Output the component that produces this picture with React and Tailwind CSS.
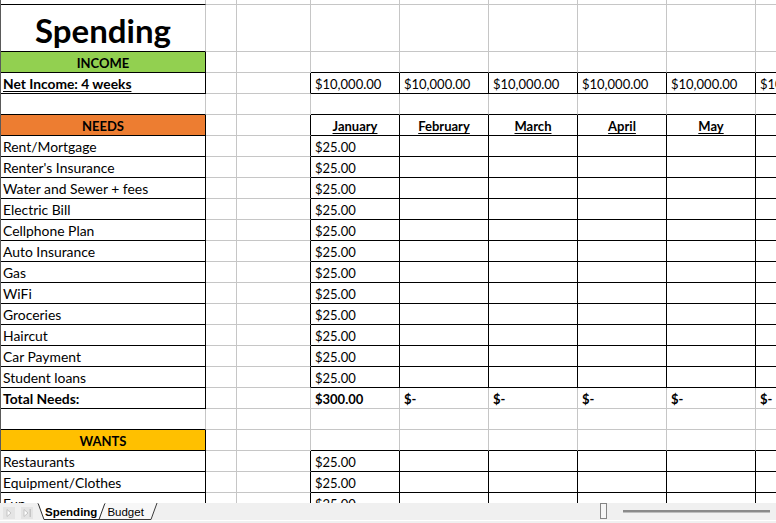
import React from "react";

const FONT = { fontFamily: "Lato, 'Open Sans', sans-serif" };

const widths = ["w-[205px]", "w-[31px]", "w-[74px]", "w-[89px]", "w-[89px]", "w-[89px]", "w-[89px]", "w-[89px]", "w-[89px]"];
const months = ["January", "February", "March", "April", "May", "June"];
const needs = [
  "Rent/Mortgage",
  "Renter's Insurance",
  "Water and Sewer + fees",
  "Electric Bill",
  "Cellphone Plan",
  "Auto Insurance",
  "Gas",
  "WiFi",
  "Groceries",
  "Haircut",
  "Car Payment",
  "Student loans",
];

const rows = [
  { kind: "top" },
  { kind: "title" },
  { kind: "income" },
  { kind: "net" },
  { kind: "blank" },
  { kind: "needs" },
  ...needs.map((l) => ({ kind: "item", label: l })),
  { kind: "total" },
  { kind: "blank" },
  { kind: "wants" },
  { kind: "item", label: "Restaurants" },
  { kind: "item", label: "Equipment/Clothes" },
  { kind: "item", label: "Fun" },
];

function isBox(r, c) {
  const row = rows[r];
  if (!row) return false;
  const k = row.kind;
  if (c === 0) return ["income", "net", "needs", "item", "total", "wants"].includes(k);
  if (c >= 3) return ["net", "needs", "item"].includes(k);
  return false;
}

function content(row, c) {
  const k = row.kind;
  if (k === "title" && c === 0)
    return <div className="w-full text-center font-bold text-[33px] leading-[40px]">Spending</div>;
  if (k === "income" && c === 0) return <div className="w-full text-center font-bold">INCOME</div>;
  if (k === "needs" && c === 0) return <div className="w-full text-center font-bold">NEEDS</div>;
  if (k === "wants" && c === 0) return <div className="w-full text-center font-bold">WANTS</div>;
  if (k === "net") {
    if (c === 0)
      return <div className="pl-[2px] text-[13.8px] font-bold underline underline-offset-[2px]">Net Income: 4 weeks</div>;
    if (c >= 3) return <div className="pl-[4px]">$10,000.00</div>;
  }
  if (k === "needs" && c >= 3)
    return <div className="w-full text-center font-bold underline underline-offset-[2px]">{months[c - 3]}</div>;
  if (k === "item") {
    if (c === 0) return <div className="pl-[2px] text-[13.9px] whitespace-nowrap">{row.label}</div>;
    if (c === 3) return <div className="pl-[4px]">$25.00</div>;
  }
  if (k === "total") {
    if (c === 0) return <div className="pl-[2px] text-[13.9px] font-bold">Total Needs:</div>;
    if (c === 3) return <div className="pl-[4px] font-bold">$300.00</div>;
    if (c > 3) return <div className="pl-[4px] font-bold">$-</div>;
  }
  return null;
}

function bgFor(row, c) {
  if (c !== 0) return "bg-white";
  if (row.kind === "income") return "bg-[#92d050]";
  if (row.kind === "needs") return "bg-[#ed7d31]";
  if (row.kind === "wants") return "bg-[#ffc000]";
  return "bg-white";
}

function Sheet() {
  return (
    <div className="h-[503px] overflow-hidden border-l border-l-[#5a5a5a] bg-white text-[13px] text-black" style={FONT}>
      {rows.map((row, r) => {
        const h = row.kind === "top" ? "h-[5px]" : row.kind === "title" ? "h-[47px]" : "h-[21px]";
        return (
          <div key={r} className={`flex ${h}`}>
            {widths.map((w, c) => {
              const rb = isBox(r, c) || isBox(r, c + 1);
              let bb = isBox(r, c) || isBox(r + 1, c);
              if (row.kind === "top" && c === 0) bb = true;
              return (
                <div
                  key={c}
                  className={`${w} ${h} shrink-0 flex items-end overflow-visible whitespace-nowrap border-r border-b leading-[16px] pb-[1px] ${
                    rb ? "border-r-black" : "border-r-[#c6c6c6]"
                  } ${bb ? "border-b-black" : "border-b-[#c6c6c6]"} ${bgFor(row, c)}`}
                >
                  {content(row, c)}
                </div>
              );
            })}
          </div>
        );
      })}
    </div>
  );
}

function TabBar() {
  return (
    <div className="relative h-[20px] bg-[#f0f0f0]">
      <svg className="absolute left-0 top-0" width="776" height="20" viewBox="0 0 776 20">
        <rect x="0" y="17" width="776" height="1" fill="#ffffff" />
        {/* nav buttons */}
        <rect x="3" y="4" width="12" height="12" fill="#e4e4e4" />
        <path d="M7 6.5 L11 10 L7 13.5 Z" fill="#ffffff" stroke="#c4c4c4" strokeWidth="1" />
        <rect x="21" y="4" width="12" height="12" fill="#e4e4e4" />
        <path d="M24 6.5 L28 10 L24 13.5 Z" fill="#ffffff" stroke="#c4c4c4" strokeWidth="1" />
        <rect x="29.5" y="6" width="1.5" height="8" fill="#c4c4c4" />
        {/* Budget tab */}
        <path d="M93 0 L99 16.5 L151 16.5 L157 0" fill="#f7f7f7" stroke="#3a3a3a" strokeWidth="1" />
        {/* Spending tab */}
        <path d="M38 0 L44 16.5 L99 16.5 L105 0" fill="#ffffff" stroke="#2a2a2a" strokeWidth="1" />
        <rect x="38.5" y="0" width="66" height="1" fill="#ffffff" />
        {/* splitter */}
        <rect x="600.5" y="0.5" width="6" height="15" fill="#f6f6f6" stroke="#858585" strokeWidth="1" />
        <rect x="623" y="7" width="147" height="2.5" fill="#8a8a8a" />
      </svg>
      <div
        className="relative flex h-[17px] items-center text-[11.5px] leading-[14px] text-black"
        style={{ fontFamily: "'Liberation Sans', Arial, sans-serif" }}
      >
        <span className="ml-[45px] font-bold">Spending</span>
        <span className="ml-[10px]">Budget</span>
      </div>
    </div>
  );
}

export default function App() {
  return (
    <div className="w-[776px] h-[523px] overflow-hidden bg-white">
      <Sheet />
      <TabBar />
    </div>
  );
}
